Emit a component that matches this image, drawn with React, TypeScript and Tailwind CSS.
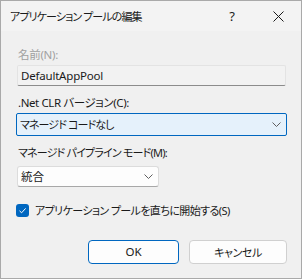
import React from "react";

function Chevron() {
  return (
    <svg width="9" height="5" viewBox="0 0 9 5" className="shrink-0">
      <path d="M0.5 0.5 L4.5 4.5 L8.5 0.5" fill="none" stroke="#5f5f5f" strokeWidth="1" />
    </svg>
  );
}

export default function App() {
  return (
    <div className="w-[302px] h-[279px] border border-[#a9a9a9] bg-[#f0f0f0] flex flex-col text-[11.5px] text-[#1a1a1a] leading-none overflow-hidden font-['Noto_Sans','Noto_Sans_CJK_JP',sans-serif] [font-feature-settings:'palt']">
      <div className="h-[30px] bg-[#f3f3f3] flex items-center shrink-0">
        <span className="pl-[9px] flex-1 text-[11px] tracking-[-0.9px]">アプリケーション プールの編集</span>
        <span className="w-[14px] text-center mr-[34px] text-[13px]">?</span>
        <svg width="11" height="11" viewBox="0 0 11 11" className="mr-[17px]">
          <path d="M0.5 0.5 L10.5 10.5 M10.5 0.5 L0.5 10.5" stroke="#1a1a1a" strokeWidth="1" />
        </svg>
      </div>
      <div className="flex flex-col pl-[15px] pr-[14px]">
        <div className="mt-[15px] pl-[2px] text-[#a0a0a0] h-[17px] flex items-center tracking-[-0.3px]">名前(N):</div>
        <div className="mt-[2px] ml-[1px] mr-[1px] h-[21px] border border-[#e3e3e3] border-b-[#8c8c8c] bg-[#f2f2f2] rounded-[2px] flex items-center pl-[3px] tracking-[-0.2px]">
          DefaultAppPool
        </div>
        <div className="mt-[10px] pl-[2px] h-[14px] flex items-center tracking-[-0.4px]">.Net CLR バージョン(C):</div>
        <div className="mt-[3px] h-[23px] border border-[#0067c0] bg-[#e5f1fb] rounded-[2px] flex items-center pl-[3px] pr-[5px]">
          <span className="flex-1 text-[11px] tracking-[-0.9px]">マネージド コードなし</span>
          <Chevron />
        </div>
        <div className="mt-[9px] pl-[2px] h-[14px] flex items-center text-[11px] tracking-[-0.8px]">マネージド パイプライン モード(M):</div>
        <div className="mt-[7px] ml-[1px] w-[142px] h-[21px] border border-[#dcdcdc] border-b-[#a8a8a8] bg-[#fdfdfd] rounded-[3px] flex items-center pl-[3px] pr-[5px]">
          <span className="flex-1">統合</span>
          <Chevron />
        </div>
        <div className="mt-[17px] flex items-center gap-[6px]">
          <div className="w-[13px] h-[13px] rounded-[3px] bg-[#0067c0] flex items-center justify-center">
            <svg width="9" height="9" viewBox="0 0 9 9">
              <path d="M1.5 4.8 L3.6 6.8 L7.6 2.4" fill="none" stroke="#ffffff" strokeWidth="1" />
            </svg>
          </div>
          <span className="text-[11px] tracking-[-0.6px]">アプリケーション プールを直ちに開始する(S)</span>
        </div>
        <div className="mt-[23px] flex justify-end gap-[10px]">
          <div className="w-[91px] h-[24px] border border-[#0067c0] bg-[#fdfdfd] rounded-[4px] flex items-center justify-center">OK</div>
          <div className="w-[98px] h-[24px] border border-[#d0d0d0] bg-[#fdfdfd] rounded-[4px] flex items-center justify-center text-[11px] tracking-[-0.4px]">キャンセル</div>
        </div>
      </div>
    </div>
  );
}
